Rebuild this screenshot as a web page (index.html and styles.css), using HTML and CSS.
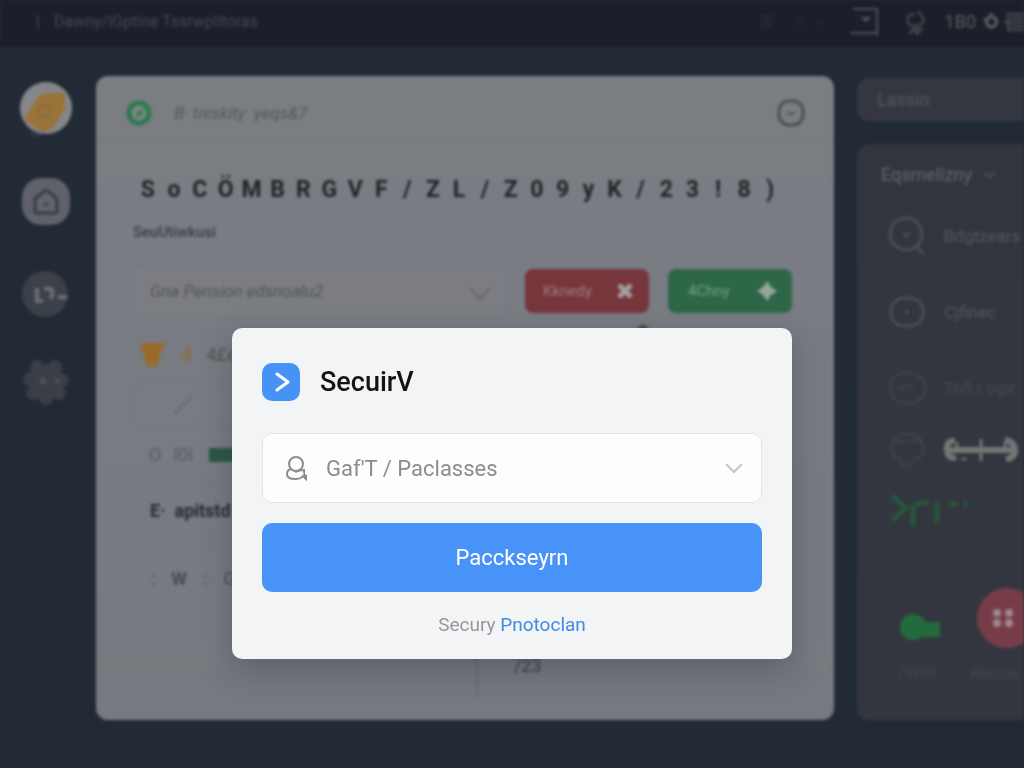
FILE: index.html
```html
<!DOCTYPE html>
<html lang="en">
<head>
<meta charset="utf-8">
<meta name="viewport" content="width=device-width, initial-scale=1">
<title>SecuirV</title>
<link rel="stylesheet" href="styles.css">
</head>
<body>
<div class="app">
  <header class="topbar">
    <span class="topbar-mark">|</span>
    <span class="topbar-title">Dawny/lGptine Tssrwplltoras</span>
    <nav class="topbar-tools">
      <svg class="faint" width="16" height="16" viewBox="0 0 16 16"><path d="M1 2h14M3 7h12M2 12h10"/></svg>
      <svg class="faint" width="26" height="16" viewBox="0 0 26 16"><path d="M3 3v4M2 12h2M20 9h4"/></svg>
      <svg width="30" height="32" viewBox="0 0 30 32"><path d="M4 3h24v27M1 27h27M14 12l3 3 3-3z"/></svg>
      <svg width="22" height="28" viewBox="0 0 22 28"><path d="M5 6C1 10 2 18 9 18s11-4 9-9M6 8l4-3M13 3l5 7M6 22l10-2M4 26l5-5 3 5 5-5"/></svg>
      <span class="topbar-label">1B0</span>
      <svg width="18" height="22" viewBox="0 0 18 22"><path class="thick" d="M9 2v4M9 6a5 5 0 1 0 1 0M2 9h3M13 9h3"/></svg>
      <svg width="22" height="20" viewBox="0 0 22 20"><path d="M22 2H6v16h16M2 10h20M8 6h14M8 14h14"/></svg>
    </nav>
  </header>

  <div class="workspace">
    <nav class="rail">
      <a href="#profile" aria-label="Profile">
        <svg width="54" height="54" viewBox="0 0 54 54"><circle cx="27" cy="26" r="26" fill="#85868a"/><path d="M5 37 19 15q4-4 12-4h15v15L39 38q-6 13-18 11z" fill="#9a7338"/><path d="m19 28 7-6 6 6-4 6-5 1z" fill="none" stroke="#8a6c3d" stroke-width="2"/><path d="M12 52q8 2 13-1" fill="none" stroke="#3c475c" stroke-width="2"/></svg>
      </a>
      <a href="#home" aria-label="Home">
        <svg width="50" height="50" viewBox="0 0 50 50"><rect x="1" y="1" width="48" height="47" rx="19" fill="#5f626b"/><path d="M14 34V22l7-6q4-5 8 0l7 6v12q0 2-2 2H16q-2 0-2-2z" fill="#62656c" stroke="#363a43" stroke-width="3"/><path d="m21 29 4-5 4 5z" fill="#44474f"/></svg>
      </a>
      <a href="#links" aria-label="Links">
        <svg width="48" height="48" viewBox="0 0 48 48"><circle cx="23" cy="24" r="23" fill="#3c4049"/><path d="M15 18v13h6M22 19h6q4 0 1 10M36 27h9" fill="none" stroke="#6c6e73" stroke-width="4"/></svg>
      </a>
      <a href="#settings" aria-label="Settings">
        <svg width="46" height="46" viewBox="0 0 46 46"><g fill="#3a3e47"><circle cx="23" cy="22" r="17"/><circle cx="14" cy="8" r="7"/><circle cx="32" cy="8" r="7"/><circle cx="7" cy="20" r="7"/><circle cx="39" cy="21" r="7"/><circle cx="10" cy="34" r="7"/><circle cx="36" cy="34" r="7"/><circle cx="23" cy="39" r="7"/></g><circle cx="20" cy="22" r="3" fill="#50535b"/><circle cx="34" cy="22" r="3" fill="#4a4d55"/></svg>
      </a>
    </nav>

    <main class="panel">
      <div class="panel-head">
        <svg width="26" height="28" viewBox="0 0 26 28"><circle cx="13" cy="14" r="10" fill="#7f8889" stroke="#2c7a50" stroke-width="5"/><path d="m10 19 1-6 7-4-2 7z" fill="#37804f"/></svg>
        <span class="panel-title">B· tniskity &nbsp;yeqs&amp;7</span>
        <svg width="28" height="28" viewBox="0 0 28 28" fill="none" stroke="#4b4e53" stroke-width="3"><rect x="2" y="2" width="24" height="24" rx="10"/><path d="M11 14h6l-3 2z" stroke="#5c5f64" stroke-width="2"/></svg>
      </div>
      <div class="panel-body">
        <div class="code-line">
          <span>S</span><span>o</span><span>C</span><span>Ö</span><span>M</span><span>B</span><span>R</span><span>G</span><span>V</span><span>F</span><span>/</span><span>Z</span><span>L</span><span>/</span><span>Z</span><span>0</span><span>9</span><span>y</span><span>K</span><span>/</span><span>2</span><span>3</span><span>!</span><span>8</span><span>)</span>
        </div>
        <label class="field-label" for="pension">SeuUtiwkusi</label>
        <div class="controls">
          <div class="select-wrap">
            <select id="pension" class="soft-select"><option>Gna Pension edsnoalu2</option></select>
            <svg width="26" height="16" viewBox="0 0 26 16" fill="none" stroke="#65686d" stroke-width="2"><path d="m3 2 10 11L23 2"/></svg>
          </div>
          <button class="action deny" type="button">Kknedy <svg width="18" height="18" viewBox="0 0 18 18" stroke="#a5a0a1" stroke-width="5"><path d="m3 3 12 12M15 3 3 15"/></svg></button>
          <button class="action allow" type="button">4Chny <svg width="20" height="20" viewBox="0 0 20 20" fill="#94a59a"><path d="m10 0 4 6 6 4-6 4-4 6-4-6-6-4 6-4z"/></svg></button>
        </div>
        <div class="row row-orange">
          <svg width="28" height="28" viewBox="0 0 28 28" fill="#9a6b28"><path d="M1 3q5 2 8 0 6 2 10-1l8 2-5 11-3 11H9L6 15z"/></svg>
          <span class="accent">4</span><span class="dim">4£e</span>
          <span class="row-mark"></span>
        </div>
        <div class="row-box"><svg width="22" height="22" viewBox="0 0 22 22" fill="none" stroke="#656973" stroke-width="2"><path d="M2 20 20 2"/></svg></div>
        <div class="row row-mid"><span>O</span><span>I0I</span><span class="chip"></span></div>
        <div class="row-box row-tall"><strong>E· &nbsp;apitstd</strong></div>
        <div class="row row-end"><span>:</span><strong>W</strong><span>:</span><span>G</span></div>
        <div class="axis"><span class="axis-line"></span><span class="axis-label">/23</span></div>
      </div>
    </main>

    <aside class="side">
      <a class="side-tab" href="#lassin">Lassin</a>
      <section class="side-card">
        <h2>Eqsmelizny <svg width="16" height="12" viewBox="0 0 16 12"><path d="M2 5h3l3 3 6-5"/></svg></h2>
        <a class="side-link" href="#search"><svg width="38" height="40" viewBox="0 0 38 40"><circle cx="18" cy="18" r="16"/><path d="m28 29 7 9M15 18l3 2 3-3"/></svg>Bdgtzears</a>
        <a class="side-link" href="#clinec"><svg width="38" height="36" viewBox="0 0 38 36"><rect x="3" y="4" width="32" height="28" rx="13"/><path d="M17 18h4"/></svg>Cjfinec</a>
        <a class="side-link dimmer" href="#report"><svg width="38" height="36" viewBox="0 0 38 36"><rect x="2" y="3" width="35" height="30" rx="15"/><path d="M9 18h6l3-2h8"/></svg>Tnfi r ogir</a>
        <div class="side-link dimmer"><svg width="38" height="38" viewBox="0 0 38 38"><path d="M4 15Q5 3 19 3t16 12q2 10-6 12-3 1-6 7-4 4-8 0-3-6-6-7-6-3-5-12z"/><path d="M5 13q4-5 9-3t9 0 10 2"/></svg>
          <svg class="dumbbell" width="74" height="28" viewBox="0 0 74 28"><path d="M11 5Q2 4 3 14t9 7M61 4q10 2 10 10t-9 9M5 14h64M20 22v2"/><path class="post" d="M37 3v22M13 6v5M61 6v5"/></svg></div>
        <svg class="signal" width="84" height="36" viewBox="0 0 84 36"><path d="m5 4 14 12L5 28M26 34V17q1-6 15-7M50 11v20M61 12h9M76 12h4"/></svg>
        <div class="side-foot">
          <a href="#npmi"><svg width="44" height="58" viewBox="0 0 44 58"><circle cx="14" cy="39" r="13"/><path d="M22 34h19v15H22z"/></svg>/opiti</a>
          <a href="#boxes"><svg width="60" height="60" viewBox="0 0 60 60"><circle cx="30" cy="30" r="30" fill="#773c48"/><g fill="#a08890"><circle cx="20" cy="25" r="4"/><circle cx="32" cy="25" r="4"/><circle cx="20" cy="35" r="4"/><circle cx="32" cy="35" r="4"/></g></svg>Rbcosi</a>
        </div>
      </section>
    </aside>
  </div>
</div>

<div class="overlay">
  <form class="modal" role="dialog" aria-labelledby="dialog-title">
    <div class="modal-head">
      <svg width="38" height="38" viewBox="0 0 38 38"><rect width="38" height="38" rx="10" fill="#4792f7"/><path d="m15 11 11 8-11 8" fill="none" stroke="#fff" stroke-width="3" stroke-linecap="round" stroke-linejoin="round"/></svg>
      <h1 id="dialog-title">SecuirV</h1>
    </div>
    <div class="modal-field">
      <svg width="22" height="26" viewBox="0 0 22 26" fill="none" stroke="#8b8d8f" stroke-width="2"><circle cx="10" cy="9" r="7"/><path d="M5 14q-4 1-4 5 0 5 8 5 6 0 8-3l3 3v-3q-2 0-2-6-5 0-9 2"/></svg>
      <select aria-label="Account"><option>Gaf'T / Paclasses</option></select>
      <svg class="modal-chevron" width="18" height="12" viewBox="0 0 18 12" fill="none" stroke="#c3c5c7" stroke-width="2"><path d="m1 2 8 8 8-8"/></svg>
    </div>
    <button class="primary" type="button">Pacckseyrn</button>
    <p class="modal-note">Secury <a href="#protection">Pnotoclan</a></p>
  </form>
</div>
</body>
</html>
```
FILE: styles.css
```css
* { box-sizing: border-box; }

body {
  margin: 0;
  background: #222a35;
  color: #34363b;
  font-family: Roboto, "Liberation Sans", sans-serif;
}

a { color: inherit; text-decoration: none; }
button, select { font: inherit; color: inherit; }
svg { flex: none; display: block; }

/* Page behind the dialog */
.app {
  display: flex;
  flex-direction: column;
  min-height: 100vh;
  overflow: hidden;
  background: #222a35;
  filter: blur(1.4px);
}

.topbar {
  display: flex;
  align-items: center;
  height: 47px;
  padding: 0 0 4px 36px;
  background: #1c1f29;
  color: #454851;
  font-size: 16px;
}
.topbar-mark { margin-right: 14px; }
.topbar-tools {
  display: flex;
  align-items: center;
  gap: 14px;
  margin-left: auto;
  margin-right: 0;
}
.topbar-tools svg { fill: none; stroke: #4b4e56; stroke-width: 2; }
.topbar-tools .faint { stroke: #2b2e38; }
.topbar-tools .faint + svg { margin-left: 4px; }
.topbar-tools .faint + .faint { margin-left: 8px; }
.topbar-tools .faint + svg + svg { margin-left: 12px; }
.topbar-tools .thick { stroke: #5c5e63; stroke-width: 3; }
.topbar-label { margin: 0 -8px 0 4px; color: #5c5e63; font-size: 18px; }
.topbar-tools svg:last-child { margin-left: -12px; }

.workspace {
  display: grid;
  grid-template-columns: 96px minmax(0, 1fr) 167px;
  flex: 1;
  padding: 29px 0 48px;
}

.rail {
  display: flex;
  flex-direction: column;
  align-items: center;
  gap: 41px;
  padding: 6px 4px 0 0;
}
.rail a:nth-child(2) { margin-bottom: 2px; }

.panel {
  margin-right: 23px;
  border-radius: 12px;
  background: linear-gradient(#7a7d82, #777a82 65%, #76797e);
}
.panel-head {
  display: flex;
  align-items: center;
  gap: 22px;
  height: 66px;
  padding: 8px 29px 0 30px;
  border-bottom: 1px solid #72757b;
}
.panel-title {
  flex: 1;
  color: #54575c;
  font-size: 17px;
  font-style: italic;
}
.panel-body { padding: 30px 42px 0 37px; }

.code-line {
  display: grid;
  grid-template-columns: repeat(25, minmax(0, 1fr));
  padding: 0 9px 0 2px;
  color: #202226;
  font-size: 23px;
  font-weight: 700;
  line-height: 36px;
  text-align: center;
}
.field-label {
  display: block;
  margin-top: 14px;
  color: #3a3d43;
  font-size: 15px;
  font-weight: 500;
  line-height: 20px;
}
.controls {
  display: flex;
  align-items: center;
  gap: 19px;
  margin-top: 23px;
}
.select-wrap { position: relative; flex: 1; }
.select-wrap svg { position: absolute; right: 13px; top: 21px; }
.soft-select {
  width: 100%;
  height: 52px;
  padding: 0 16px;
  appearance: none;
  border: 1px solid #74777d;
  border-radius: 6px;
  background: #7b7d82;
  color: #505359;
  font-size: 17px;
  font-style: italic;
}
.action {
  display: flex;
  align-items: center;
  justify-content: space-between;
  width: 124px;
  height: 44px;
  padding: 0 15px 0 18px;
  border: 0;
  border-radius: 8px;
  color: #a07c80;
  font-size: 15px;
}
.deny { background: #76363b; }
.allow { background: #2d6747; color: #76a087; padding-left: 20px; }

.row {
  display: flex;
  align-items: center;
  padding-left: 16px;
  color: #484a4e;
  font-size: 18px;
}
.row-orange { height: 66px; padding: 8px 0 0 5px; gap: 14px; }
.accent { color: #8d6a3e; font-size: 22px; }
.dim { color: #514d4b; }
.row-mark {
  align-self: flex-start;
  width: 12px;
  height: 12px;
  margin-left: 386px;
  border-radius: 6px;
  background: #4c4541;
}
.row-box {
  display: flex;
  align-items: center;
  height: 43px;
  padding-left: 38px;
  border: 1px solid #72757b;
  border-radius: 6px;
}
.row-mid { height: 57px; gap: 12px; color: #56595d; }
.chip { width: 40px; height: 14px; margin-left: 4px; background: #2d5645; }
.row-tall { height: 54px; padding-left: 16px; color: #27292d; font-size: 18px; }
.row-end {
  height: 58px;
  gap: 16px;
  margin-top: 12px;
  padding-left: 18px;
  border-top: 1px solid #72757b;
}
.axis {
  display: flex;
  align-items: flex-start;
  gap: 36px;
  height: 90px;
  padding: 48px 0 0 343px;
}
.axis-line { width: 2px; height: 42px; background: #686b72; }
.axis-label { color: #43464b; font-size: 18px; font-weight: 500; }

.side {
  display: flex;
  flex-direction: column;
  gap: 23px;
  min-width: 0;
  white-space: nowrap;
  color: #55575d;
}
.side-tab {
  margin-top: 2px;
  padding: 0 20px;
  border-radius: 12px 0 0 12px;
  background: #343740;
  font-size: 18px;
  line-height: 43px;
}
.side-card {
  flex: 1;
  overflow: hidden;
  padding: 20px 0 0 24px;
  border-radius: 12px 0 0 12px;
  background: linear-gradient(#31353d, #34363f);
}
.side-card h2 {
  display: flex;
  align-items: center;
  gap: 10px;
  margin: 0 0 30px;
  color: #66676a;
  font-size: 18px;
  font-weight: 400;
  line-height: 22px;
}
.side-card svg { fill: none; stroke: #4b4e55; stroke-width: 3; }
.side-card h2 svg { stroke-width: 2; }
.side-link {
  display: flex;
  align-items: center;
  gap: 18px;
  height: 40px;
  margin: 0 0 36px 7px;
  font-size: 17px;
}
.side-link.dimmer { color: #484b52; margin-bottom: 22px; }
.side-link.dimmer svg { stroke: #3d4048; }
.side-link.dimmer .dumbbell { stroke: #747576; stroke-width: 6; }
.side-link.dimmer .post { stroke-width: 3; }
.side-card .signal {
  margin: 0 0 60px 6px;
  stroke: #27563d;
  stroke-width: 5;
}
.side-foot { display: flex; align-items: flex-start; gap: 28px; padding-left: 18px; }
.side-foot a {
  display: flex;
  flex-direction: column;
  gap: 16px;
  color: #44474e;
  font-size: 16px;
}
.side-card .side-foot svg { stroke: none; }
.side-foot a:last-child svg { margin-left: 6px; }
.side-card .side-foot a:first-child svg { fill: #236b3c; }

/* Dialog */
.overlay {
  position: fixed;
  inset: 0;
  display: grid;
  place-items: center;
  padding: 219px 16px 0;
}
.modal {
  width: 100%;
  max-width: 560px;
  padding: 35px 30px 22px;
  border-radius: 10px;
  background: #f3f4f6;
  box-shadow: 0 12px 32px rgba(35, 42, 53, 0.3);
}
.modal-head { display: flex; align-items: center; gap: 20px; }
.modal-head h1 {
  margin: 0;
  color: #111315;
  font-size: 27px;
  font-weight: 500;
  line-height: 38px;
}
.modal-field {
  position: relative;
  display: flex;
  align-items: center;
  height: 70px;
  margin-top: 32px;
  padding-left: 23px;
  border: 1px solid #e4e5e7;
  border-radius: 10px;
  background: #fdfdfd;
}
.modal-field select {
  flex: 1;
  align-self: stretch;
  min-width: 0;
  padding: 0 48px 0 18px;
  appearance: none;
  border: 0;
  border-radius: 10px;
  background: transparent;
  color: #8b8d8f;
  font-size: 22px;
}
.modal-chevron { position: absolute; right: 18px; pointer-events: none; }
.primary {
  width: 100%;
  height: 69px;
  margin-top: 20px;
  border: 0;
  border-radius: 10px;
  background: #4893f7;
  color: #fff;
  font-size: 22px;
}
.modal-note {
  margin: 21px 0 0;
  color: #96989b;
  font-size: 19px;
  line-height: 24px;
  text-align: center;
}
.modal-note a { color: #3d8ce4; }
```
